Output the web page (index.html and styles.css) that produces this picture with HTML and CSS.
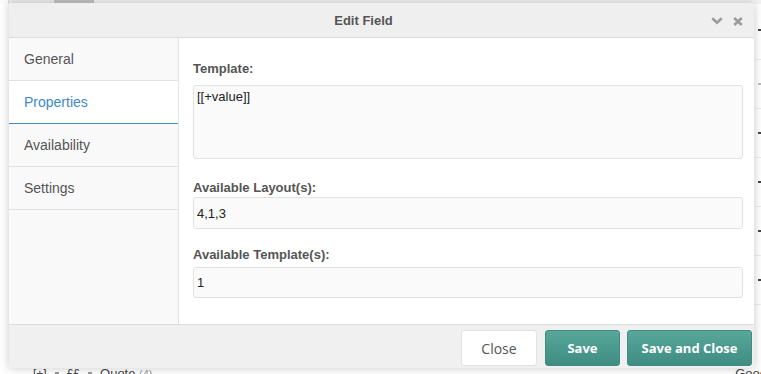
FILE: index.html
```html
<!DOCTYPE html>
<html>
<head>
<meta charset="utf-8">
<link rel="stylesheet" href="styles.css">
</head>
<body>
<div class="page">
  <div class="topstrip"><span class="ts-a"></span><span class="ts-b"></span><span class="ts-c"></span></div>
  <div class="sidecol">
    <div class="srow"><span class="mk"></span></div>
    <div class="srow"><span class="mk mk-lite"></span></div>
    <div class="srow"><span class="mk"></span></div>
    <div class="srow"><span class="mk"></span></div>
    <div class="srow"><span class="mk"></span></div>
    <div class="srow"><span class="mk"></span></div>
  </div>
  <div class="bottomrow">
    <span class="bi">[+]</span><span class="sq"></span><span class="bi">££</span><span class="sq"></span><span class="bq">Quote <em>(4)</em></span>
    <span class="good">Good</span>
  </div>
</div>

<div class="window">
  <div class="win-header">
    <div class="win-title">Edit Field</div>
    <div class="win-tools">
      <svg class="tool-chev" width="12" height="8" viewBox="0 0 12 8"><polyline points="1.3,1.3 6,5.8 10.7,1.3" fill="none" stroke="#9b9b9b" stroke-width="2.6"/></svg>
      <svg class="tool-x" width="10" height="9" viewBox="0 0 10 9"><path d="M1.2 1 L8.8 8 M8.8 1 L1.2 8" fill="none" stroke="#9b9b9b" stroke-width="2.6"/></svg>
    </div>
  </div>
  <div class="win-body">
    <nav class="tabs">
      <div class="tab">General</div>
      <div class="tab active">Properties</div>
      <div class="tab">Availability</div>
      <div class="tab">Settings</div>
    </nav>
    <div class="panel">
      <div class="field field-first">
        <label class="flabel lbl-template">Template:</label>
        <div class="textarea">[[+value]]</div>
      </div>
      <div class="field field-layout">
        <label class="flabel lbl-layout">Available Layout(s):</label>
        <div class="input input-tall">4,1,3</div>
      </div>
      <div class="field field-tpl">
        <label class="flabel lbl-tpl">Available Template(s):</label>
        <div class="input">1</div>
      </div>
    </div>
  </div>
  <div class="win-footer">
    <button class="btn btn-close">Close</button>
    <button class="btn btn-primary btn-save">Save</button>
    <button class="btn btn-primary btn-saveclose">Save and Close</button>
  </div>
</div>
</body>
</html>
```

FILE: styles.css
```css
html, body {
  margin: 0;
  padding: 0;
}
body {
  width: 761px;
  height: 374px;
  overflow: hidden;
  background: #ffffff;
  font-family: "Liberation Sans", Arial, sans-serif;
  position: relative;
}

/* background page */
.page {
  position: absolute;
  inset: 0;
}
.topstrip {
  display: flex;
  height: 4px;
  background: #f2f2f2;
}
.ts-a { width: 8px; background: #fbfbfb; border-right: 1px solid #dcdcdc; }
.ts-b { width: 45px; background: #ececec; }
.ts-c { width: 40px; background: #c2c2c2; }
.sidecol {
  position: absolute;
  left: 755px;
  top: 0;
  width: 6px;
  display: flex;
  flex-direction: column;
}
.srow {
  height: 49px;
  border-bottom: 1px solid #ececec;
  display: flex;
  align-items: center;
  padding-left: 3px;
  box-sizing: border-box;
}
.srow:first-child { height: 60px; }
.mk {
  width: 3px;
  height: 2px;
  background: #444;
}
.mk-lite { background: #bbb; }
.bottomrow {
  position: absolute;
  left: 33px;
  top: 366px;
  right: 0;
  display: flex;
  align-items: center;
  gap: 8px;
  font-size: 13px;
  color: #444;
}
.bi { font-size: 12px; }
.sq { width: 4px; height: 4px; background: #999; }
.bq em { font-style: normal; color: #999; font-size: 11px; }
.good { margin-left: auto; margin-right: -6px; }

/* window */
.window {
  position: absolute;
  left: 9px;
  top: 3px;
  width: 745px;
  height: 365px;
  display: flex;
  flex-direction: column;
  background: #fff;
  box-shadow: 0 0 9px rgba(0, 0, 0, 0.22);
}
.win-header {
  height: 34px;
  flex: none;
  display: flex;
  align-items: center;
  background: #efefef;
  border-bottom: 1px solid #dcdcdc;
}
.win-title {
  flex: 1;
  text-align: center;
  padding-left: 7px;
  font-size: 13px;
  font-weight: bold;
  color: #555;
}
.win-tools {
  display: flex;
  align-items: center;
  gap: 10px;
  padding-right: 11px;
  padding-top: 1px;
}
.tool-x { margin-top: 1px; }

.win-body {
  flex: 1;
  display: flex;
  min-height: 0;
}
.tabs {
  width: 169px;
  flex: none;
  background: #f9f9f9;
  border-right: 1px solid #e3e3e3;
}
.tab {
  height: 42px;
  line-height: 42px;
  border-bottom: 1px solid #e2e2e2;
  padding-left: 15px;
  font-size: 14px;
  color: #555;
}
.tab.active {
  background: #fff;
  color: #3d8ac4;
  border-bottom-color: #4a8cbf;
}
.panel {
  flex: 1;
  padding: 23px 11px 0 14px;
}
.flabel {
  display: block;
  font-size: 13px;
  line-height: 16px;
  font-weight: bold;
  color: #555;
}
.lbl-template { margin-bottom: 8px; }
.field-layout { margin-top: 21px; }
.lbl-layout { margin-bottom: 1px; }
.field-tpl { margin-top: 18px; }
.lbl-tpl { margin-bottom: 4px; }

.textarea, .input {
  box-sizing: border-box;
  background: #fafafa;
  border: 1px solid #e1e1e1;
  border-radius: 3px;
  font-size: 13px;
  color: #222;
  padding-left: 3px;
}
.textarea {
  height: 74px;
  padding-top: 3px;
  line-height: 16px;
}
.input {
  height: 31px;
  display: flex;
  align-items: center;
}
.input-tall { height: 32px; }

.win-footer {
  height: 44px;
  flex: none;
  box-sizing: border-box;
  border-top: 1px solid #dcdcdc;
  background: #f0f0f0;
  display: flex;
  justify-content: flex-end;
  align-items: flex-start;
  padding: 5px 2px 0 0;
  gap: 8px;
}
.btn {
  height: 36px;
  box-sizing: border-box;
  border-radius: 3px;
  font-family: "Open Sans", "Liberation Sans", sans-serif;
  font-size: 14px;
  padding: 0;
  cursor: pointer;
}
.btn-close {
  width: 76px;
  background: #fff;
  border: 1px solid #e3e3e3;
  color: #555;
}
.btn-primary {
  border: 1px solid #3f8c81;
  background: linear-gradient(#58a79b, #3f8d82);
  color: #fff;
  font-weight: bold;
  font-size: 13px;
}
.btn-save { width: 75px; }
.btn-saveclose { width: 125px; margin-left: -1px; }
```
